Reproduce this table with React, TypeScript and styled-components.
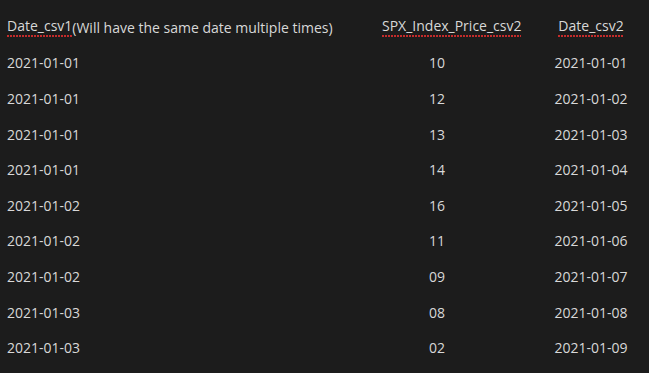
import React from "react";
import styled, { createGlobalStyle } from "styled-components";

const Global = createGlobalStyle`
  html, body {
    margin: 0;
    padding: 0;
    background: #1c1c1c;
  }
  body {
    font-family: "Open Sans", "Noto Sans", sans-serif;
    font-size: 14px;
    color: #d8d8d8;
  }
`;

const Table = styled.div`
  display: grid;
  grid-template-columns: 372px 130px 1fr;
  grid-auto-rows: 35.6px;
  padding-top: 10px;
  width: 649px;
  height: 373px;
  box-sizing: border-box;
  overflow: hidden;
`;

const Cell = styled.div<{ $align?: "start" | "center"; $indent?: number }>`
  display: flex;
  align-items: center;
  justify-content: ${(p) => (p.$align === "center" ? "center" : "flex-start")};
  padding-left: ${(p) => p.$indent ?? 0}px;
  white-space: nowrap;
  line-height: 1;
`;

const HeaderCell = styled(Cell)`
  overflow: visible;
`;

const Squiggle = styled.span`
  background-image: linear-gradient(
    90deg,
    #c32b2b 0 2px,
    transparent 2px 3px
  );
  background-size: 3px 2px;
  background-repeat: repeat-x;
  background-position: 0 100%;
  padding-bottom: 4px;
`;

const rows: [string, string, string][] = [
  ["2021-01-01", "10", "2021-01-01"],
  ["2021-01-01", "12", "2021-01-02"],
  ["2021-01-01", "13", "2021-01-03"],
  ["2021-01-01", "14", "2021-01-04"],
  ["2021-01-02", "16", "2021-01-05"],
  ["2021-01-02", "11", "2021-01-06"],
  ["2021-01-02", "09", "2021-01-07"],
  ["2021-01-03", "08", "2021-01-08"],
  ["2021-01-03", "02", "2021-01-09"],
];

export default function App() {
  return (
    <>
      <Global />
      <Table>
        <HeaderCell $indent={7}>
          <Squiggle>Date_csv1</Squiggle>(Will have the same date multiple times)
        </HeaderCell>
        <HeaderCell $indent={10}>
          <Squiggle>SPX_Index_Price_csv2</Squiggle>
        </HeaderCell>
        <HeaderCell $align="center" $indent={31}>
          <Squiggle>Date_csv2</Squiggle>
        </HeaderCell>
        {rows.map(([a, b, c], i) => (
          <React.Fragment key={i}>
            <Cell $indent={7}>{a}</Cell>
            <Cell $align="center">{b}</Cell>
            <Cell $align="center" $indent={31}>{c}</Cell>
          </React.Fragment>
        ))}
      </Table>
    </>
  );
}
